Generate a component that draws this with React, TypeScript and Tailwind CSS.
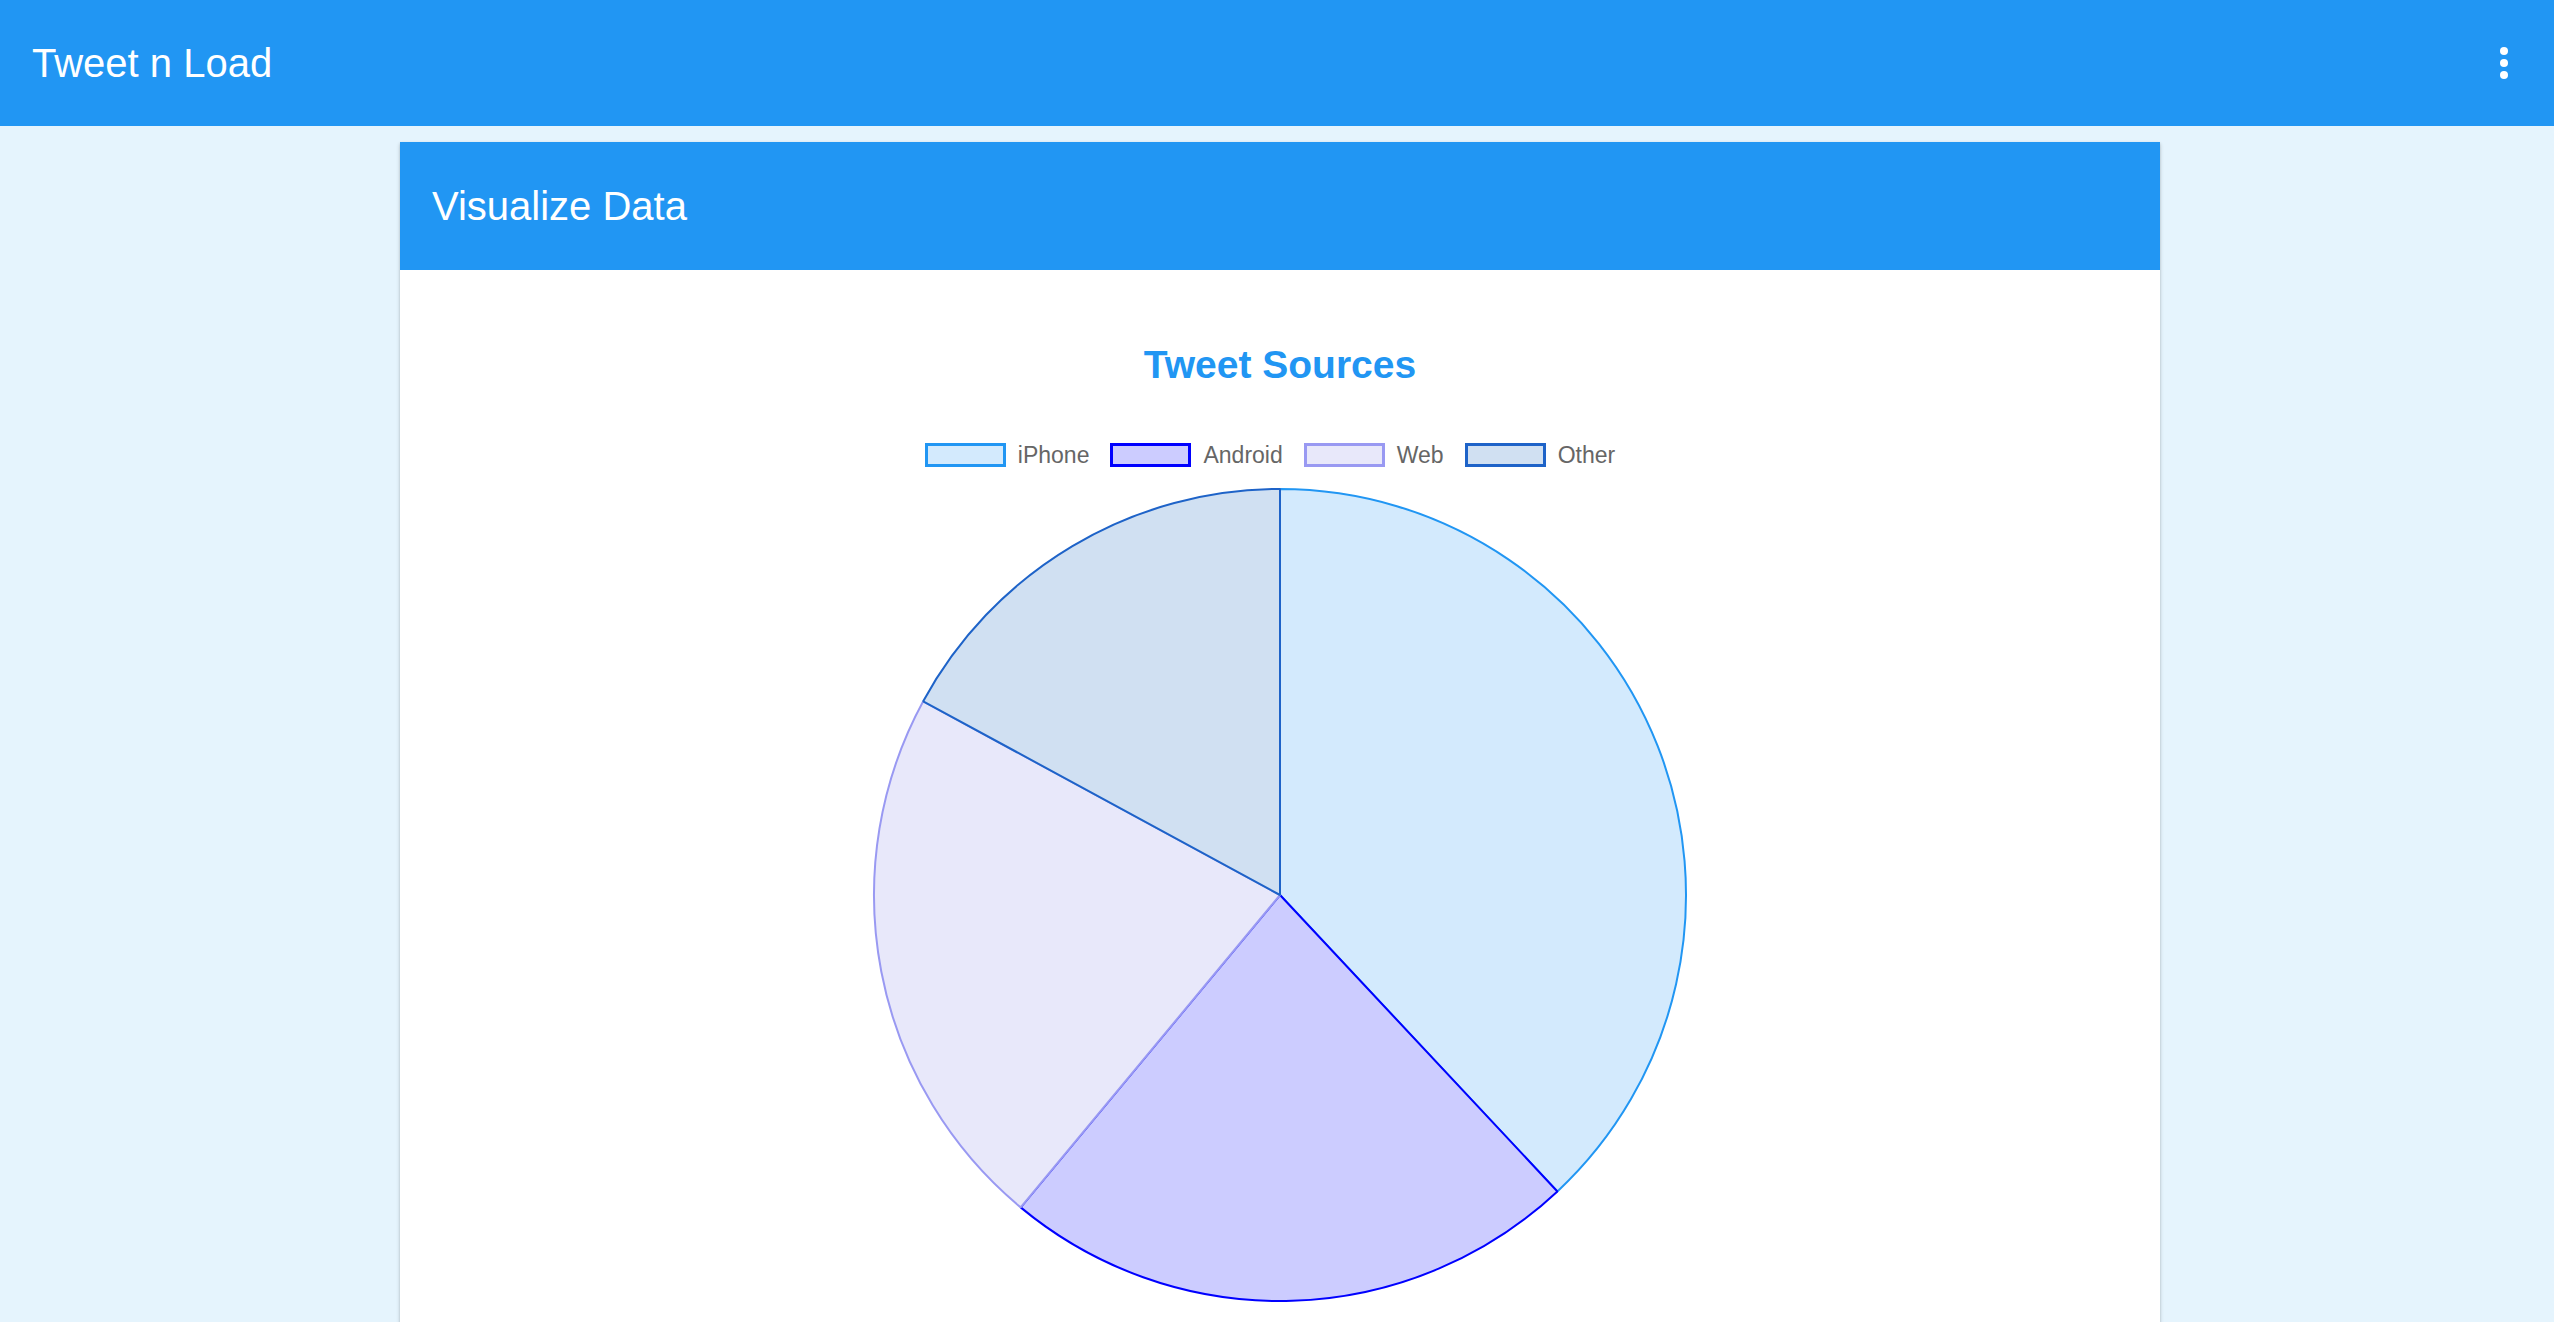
import React from "react";

const slices = [
  { label: "iPhone", deg: 136.9, fill: "#D3EAFD", stroke: "#2196F3" },
  { label: "Android", deg: 82.8, fill: "#CCCCFF", stroke: "#0000FF" },
  { label: "Web", deg: 78.8, fill: "#E8E8FA", stroke: "#9999F2" },
  { label: "Other", deg: 61.5, fill: "#D0E0F2", stroke: "#1E63C8" },
];

function Pie() {
  const cx = 409;
  const cy = 409;
  const r = 406;
  let start = -90;
  const paths = slices.map((s) => {
    const end = start + s.deg;
    const a0 = (start * Math.PI) / 180;
    const a1 = (end * Math.PI) / 180;
    const x0 = cx + r * Math.cos(a0);
    const y0 = cy + r * Math.sin(a0);
    const x1 = cx + r * Math.cos(a1);
    const y1 = cy + r * Math.sin(a1);
    const large = s.deg > 180 ? 1 : 0;
    const d = `M ${cx} ${cy} L ${x0} ${y0} A ${r} ${r} 0 ${large} 1 ${x1} ${y1} Z`;
    start = end;
    return (
      <path
        key={s.label}
        d={d}
        fill={s.fill}
        stroke={s.stroke}
        strokeWidth={2}
        strokeLinejoin="bevel"
      />
    );
  });
  return (
    <svg width={818} height={818} viewBox="0 0 818 818">
      {paths}
    </svg>
  );
}

export default function App() {
  return (
    <div
      className="min-h-screen bg-[#E5F4FD] overflow-hidden"
      style={{ fontFamily: '"Liberation Sans", Arial, sans-serif' }}
    >
      <header className="h-[126px] bg-[#2196F3] flex items-center justify-between">
        <div className="pl-[32px] text-[40px] leading-none text-white">Tweet n Load</div>
        <div className="mr-[46px] flex flex-col gap-[4px]">
          <span className="block w-[8px] h-[8px] rounded-full bg-white" />
          <span className="block w-[8px] h-[8px] rounded-full bg-white" />
          <span className="block w-[8px] h-[8px] rounded-full bg-white" />
        </div>
      </header>
      <div className="pt-[16px] pl-[400px]">
        <div className="w-[1760px] bg-white shadow-[0_2px_4px_rgba(0,0,0,0.2),0_1px_2px_rgba(0,0,0,0.1)] min-h-[1200px]">
          <div className="h-[128px] bg-[#2196F3] flex items-center pl-[32px]">
            <span className="text-[40px] leading-none text-white">Visualize Data</span>
          </div>
          <div className="flex flex-col items-center pt-[75px]">
            <div className="text-[39px] leading-none font-bold text-[#2196F3]">Tweet Sources</div>
            <div className="mt-[59px] mr-[20px] flex items-center gap-[21px] h-[24px]">
              {slices.map((s) => (
                <div key={s.label} className="flex items-center gap-[12px]">
                  <span
                    className="block w-[81px] h-[24px] border-[3px]"
                    style={{ backgroundColor: s.fill, borderColor: s.stroke }}
                  />
                  <span className="text-[23px] leading-none text-[#666666]">{s.label}</span>
                </div>
              ))}
            </div>
            <div className="mt-[19px]">
              <Pie />
            </div>
          </div>
        </div>
      </div>
    </div>
  );
}
